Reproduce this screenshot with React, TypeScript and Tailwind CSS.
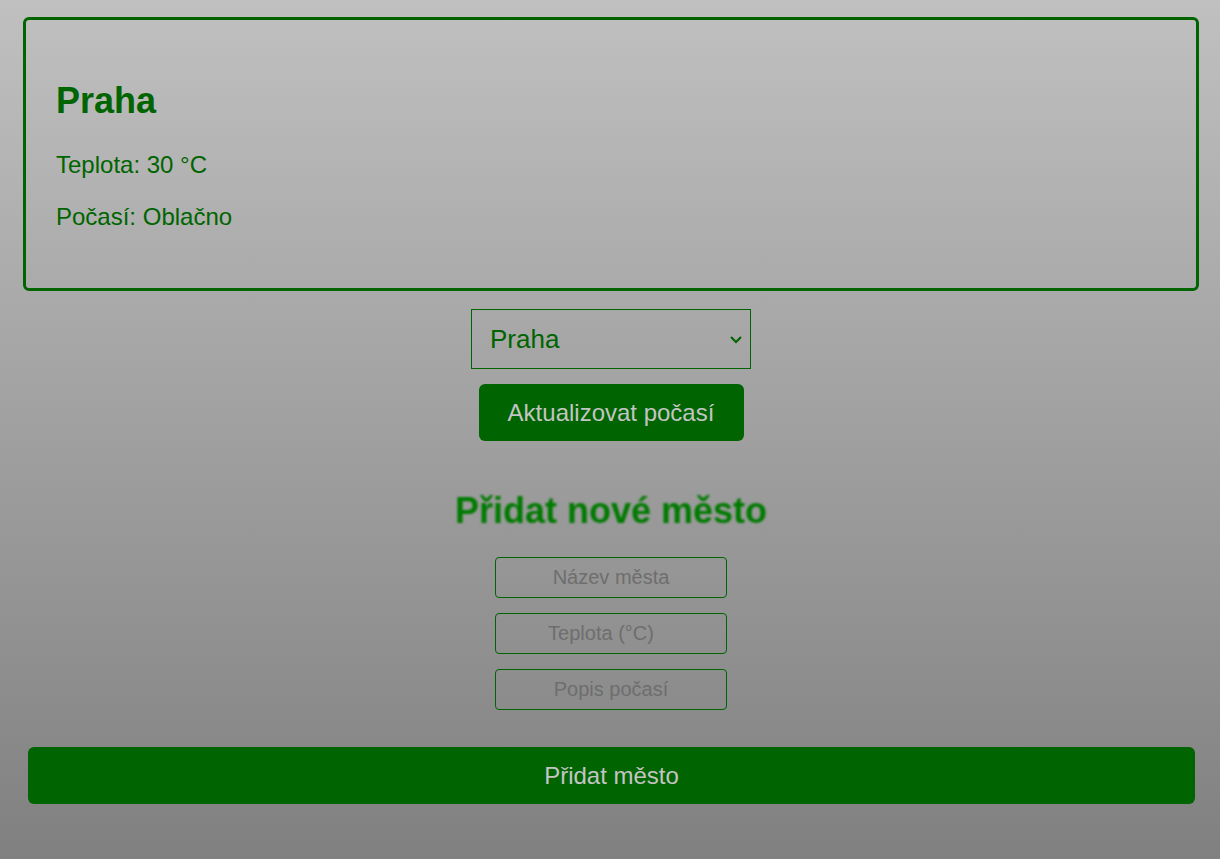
import React from "react";

interface City {
  name: string;
  temp: number;
  desc: string;
}

const cities: City[] = [
  { name: "Praha", temp: 30, desc: "Oblačno" },
  { name: "Brno", temp: 27, desc: "Slunečno" },
  { name: "Ostrava", temp: 24, desc: "Déšť" },
];

export default function App() {
  const [selected, setSelected] = React.useState("Praha");
  const city = cities.find((c) => c.name === selected) ?? cities[0];

  return (
    <main className="min-h-screen bg-[linear-gradient(to_bottom,#c0c0c0,#808080)] pt-[17px] pb-[40px] font-['Liberation_Sans',Arial,sans-serif]">
      {/* Weather card */}
      <section className="ml-[23px] mr-[21px] h-[274px] rounded-[6px] border-[3px] border-[#006400] px-[30px] pt-[30px] text-[#006400]">
        <h2 className="mt-[30px] mb-[30px] text-[36px] font-bold leading-[41px]">
          {city.name}
        </h2>
        <p className="mb-[24px] text-[24px] leading-[28px]">
          Teplota: {city.temp} °C
        </p>
        <p className="text-[24px] leading-[28px]">Počasí: {city.desc}</p>
      </section>

      {/* City picker */}
      <div className="mt-[18px] flex flex-col items-center pl-[2px]">
        <div className="relative">
          <select
            value={selected}
            onChange={(e) => setSelected(e.target.value)}
            className="h-[60px] w-[280px] appearance-none border border-[#006400] bg-transparent pl-[18px] text-[26px] text-[#006400] outline-none"
          >
            {cities.map((c) => (
              <option key={c.name}>{c.name}</option>
            ))}
          </select>
          <svg
            className="pointer-events-none absolute right-[8px] top-[26px]"
            width="14"
            height="9"
            viewBox="0 0 14 9"
            fill="none"
          >
            <path d="M2 2L7 7L12 2" stroke="#006400" strokeWidth="2" />
          </svg>
        </div>
        <button className="mt-[15px] h-[57px] w-[265px] rounded-[6px] bg-[#006400] text-[24px] text-[#c4c4c4]">
          Aktualizovat počasí
        </button>
      </div>

      {/* Add city */}
      <div className="mt-[49px] flex flex-col items-center pl-[2px]">
        <h2 className="text-[36px] font-bold leading-[41px] text-[#007a00] blur-[1.2px]">
          Přidat nové město
        </h2>
        <div className="mt-[26px] flex flex-col gap-[15px]">
          <input
            placeholder="Název města"
            className="h-[41px] w-[232px] rounded-[4px] border border-[#006400] bg-transparent text-center text-[20px] text-[#006400] outline-none placeholder:text-[#6e6e6e]"
          />
          <input
            placeholder="Teplota (°C)"
            className="h-[41px] w-[232px] rounded-[4px] border border-[#006400] bg-transparent pr-[20px] text-center text-[20px] text-[#006400] outline-none placeholder:text-[#6e6e6e]"
          />
          <input
            placeholder="Popis počasí"
            className="h-[41px] w-[232px] rounded-[4px] border border-[#006400] bg-transparent text-center text-[20px] text-[#006400] outline-none placeholder:text-[#6e6e6e]"
          />
        </div>
      </div>

      <div className="mt-[37px] pl-[28px] pr-[25px]">
        <button className="h-[57px] w-full rounded-[6px] bg-[#006400] text-[24px] text-[#c4c4c4]">
          Přidat město
        </button>
      </div>
    </main>
  );
}
